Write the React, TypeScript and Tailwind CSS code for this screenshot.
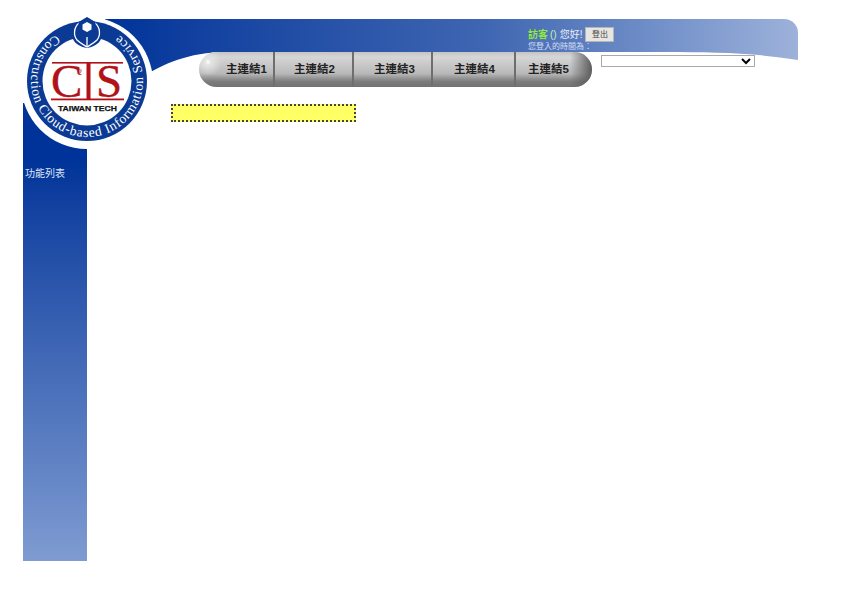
export default function App() {
  const links = [
    { label: "主連結1", w: "w-[76px]", pl: "pl-[27px]" },
    { label: "主連結2", w: "w-[79px]", pl: "pl-[19px]" },
    { label: "主連結3", w: "w-[79px]", pl: "pl-[20px]" },
    { label: "主連結4", w: "w-[83px]", pl: "pl-[21px]" },
    { label: "主連結5", w: "w-[76px]", pl: "pl-[12px]" },
  ];
  return (
    <div className="relative w-[842px] h-[595px] overflow-hidden bg-white font-['Liberation_Sans','Noto_Sans_CJK_TC',sans-serif] pt-[19px]">
      {/* header */}
      <div className="relative h-[84px]">
        <div className="absolute left-[105px] top-0 w-[693px] h-[56px] rounded-tr-[14px] bg-linear-to-r from-[#003399] via-[#3f66b2] via-55% to-[#9db2da]">
          <svg className="absolute inset-0" width="693" height="56" viewBox="0 0 693 56">
            <path d="M0 56 L40 56 C58 46 82 33 122 33 L560 33 C610 33 650 34 693 41 L693 56 Z" fill="#fff" />
          </svg>
        </div>
        <div className="relative flex flex-col">
          <div className="h-[33px] pl-[528px] pt-[8px] text-[#e8edf8]">
            <div className="flex items-center h-[15px] leading-none">
              <span className="text-[10px] font-semibold text-[#8fe83c]">訪客</span>
              <span className="text-[10px] text-[#c8f0b0] ml-[2px]">()</span>
              <span className="text-[10px] ml-[3px]">您好!</span>
              <button className="ml-[3px] w-[29px] h-[15px] bg-[#e8e6e2] border border-[#b5b5b5] text-[8px] leading-none text-[#444]">登出</button>
            </div>
            <div className="text-[8px] leading-[9px] text-[#d4def2]">您登入的時間為：</div>
          </div>
          <div className="flex pl-[199px]">
            <nav className="relative flex w-[393px] h-[35px] rounded-full overflow-hidden bg-[linear-gradient(180deg,#c4c4c4_0%,#d6d6d6_14%,#b8b8b8_62%,#7c7c7c_84%,#727272_100%)]">
              <div className="absolute left-0 top-0 w-[26px] h-[35px] bg-[radial-gradient(circle_at_9px_10px,#ffffff_0,#e4e4e4_3px,rgba(200,200,200,0)_14px)]" />
              <div className="absolute right-0 top-0 w-[22px] h-[35px] bg-linear-to-r from-transparent to-[#5c5c5c]" />
              {links.map((l, i) => (
                <a
                  key={l.label}
                  className={`relative flex items-center h-full ${l.w} ${l.pl} text-[11.5px] font-semibold text-[#222] ${i < 4 ? "border-r-2 border-[#6e6e6e]" : ""}`}
                >
                  {l.label}
                </a>
              ))}
            </nav>
            <select className="ml-[9px] mt-[3px] w-[154px] h-[12px] bg-white border border-[#a9a9a9] text-[9px] leading-none">
              <option></option>
            </select>
          </div>
        </div>
      </div>

      {/* body */}
      <div className="flex">
        <aside className="ml-[23px] w-[64px] h-[458px] pt-[64px] pl-[2px] bg-linear-to-b from-[#003399] from-[12%] to-[#7f9bd1] text-[10px] leading-[13px] text-[#dfe7f7]">
          功能列表
        </aside>
        <main className="ml-[84px] pt-[1px]">
          <div className="w-[185px] h-[18px] bg-[#ffff66] border-2 border-dotted border-[#444]" />
        </main>
      </div>

      {/* logo */}
      <svg className="absolute left-[21px] top-[17px]" width="132" height="134" viewBox="0 0 132 134">
        <defs>
          <path id="ringText" d="M 34.7 17.6 A 56 56 0 1 0 97.3 17.6" />
        </defs>
        <circle cx="66" cy="66" r="66" fill="#fff" />
        <circle cx="66" cy="64" r="60" fill="#0a3a94" />
        <circle cx="66" cy="64" r="44.5" fill="#fff" />
        <text fontFamily="'Liberation Serif', serif" fontSize="13.5" fill="#fff">
          <textPath href="#ringText" textLength="284" lengthAdjust="spacing">
            Construction Cloud-based Information Service
          </textPath>
        </text>
        {/* emblem */}
        <path d="M66 0 L76 6 C80 10 82 16 80 22 C78 27 72 30 66 31 C60 30 54 27 52 22 C50 16 52 10 56 6 Z" fill="#0a3a94" />
        <path d="M58 6 C53 10 52 18 56 23 C59 26 63 28 66 30 C69 28 73 26 76 23 C80 18 79 10 74 6" fill="none" stroke="#fff" strokeWidth="1.3" />
        <path d="M66 20 V30" stroke="#fff" strokeWidth="1.3" />
        <path d="M66 0.5 L74.5 5.5 V14.5 L66 19.5 L57.5 14.5 V5.5 Z" fill="#0a3a94" />
        <path d="M66 5 L70.5 7.6 V12.4 L66 15 L61.5 12.4 V7.6 Z" fill="#fff" />
        {/* mark */}
        <rect x="31" y="45" width="71" height="1.6" fill="#b01218" />
        <rect x="30" y="81.5" width="73" height="1.8" fill="#b01218" />
        <rect x="65.5" y="45" width="4" height="38" fill="#b01218" />
        <text x="30" y="80" fontFamily="'Liberation Serif', serif" fontSize="47" fill="#b01218" stroke="#b01218" strokeWidth="0.4">C</text>
        <text x="75" y="80" fontFamily="'Liberation Serif', serif" fontSize="47" fill="#b01218" stroke="#b01218" strokeWidth="0.4">S</text>
        <text x="57" y="58" fontFamily="'Liberation Serif', serif" fontSize="8" fill="#b01218">2</text>
        <text x="37" y="94" textLength="59" lengthAdjust="spacingAndGlyphs" fontFamily="'Liberation Sans', sans-serif" fontWeight="700" fontSize="7.5" stroke="#111" strokeWidth="0.25" fill="#111">TAIWAN TECH</text>
      </svg>
    </div>
  );
}
